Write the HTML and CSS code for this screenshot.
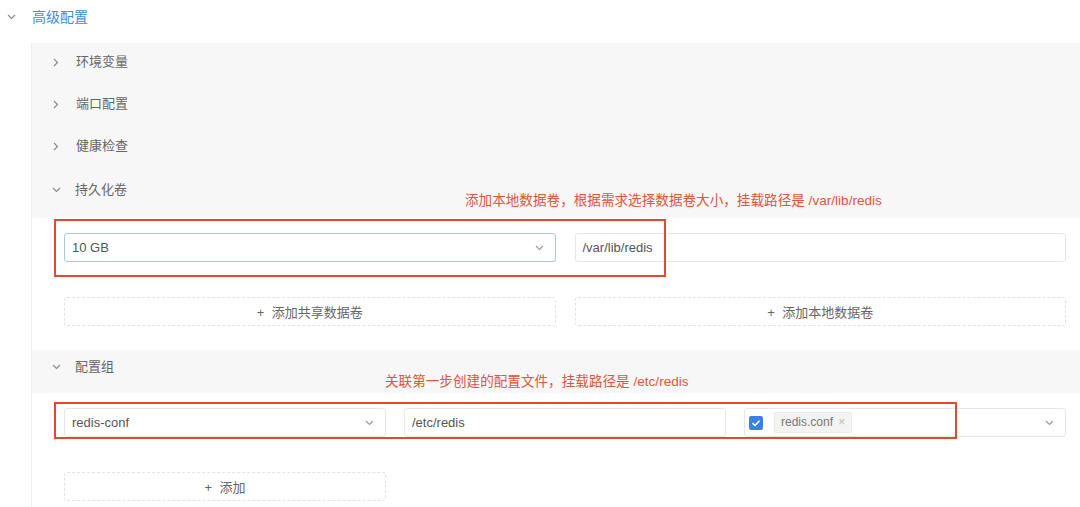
FILE: index.html
```html
<!DOCTYPE html>
<html lang="zh-CN">
<head>
<meta charset="utf-8">
<title>高级配置</title>
<link rel="stylesheet" href="styles.css">
</head>
<body>
<div class="section-head">
  <svg class="chev chev-down" width="9" height="6" viewBox="0 0 9 6"><path d="M1 1 L4.5 4.5 L8 1" fill="none" stroke="#888" stroke-width="1.1"/></svg>
  <span class="section-title">高级配置</span>
</div>
<div class="panel">
  <div class="row-head">
    <svg class="chev chev-right" width="6" height="9" viewBox="0 0 6 9"><path d="M1 1 L4.5 4.5 L1 8" fill="none" stroke="#888" stroke-width="1.1"/></svg>
    <span class="row-title">环境变量</span>
  </div>
  <div class="row-head">
    <svg class="chev chev-right" width="6" height="9" viewBox="0 0 6 9"><path d="M1 1 L4.5 4.5 L1 8" fill="none" stroke="#888" stroke-width="1.1"/></svg>
    <span class="row-title">端口配置</span>
  </div>
  <div class="row-head">
    <svg class="chev chev-right" width="6" height="9" viewBox="0 0 6 9"><path d="M1 1 L4.5 4.5 L1 8" fill="none" stroke="#888" stroke-width="1.1"/></svg>
    <span class="row-title">健康检查</span>
  </div>
  <div class="row-head row-tall">
    <svg class="chev" width="9" height="6" viewBox="0 0 9 6"><path d="M1 1 L4.5 4.5 L8 1" fill="none" stroke="#888" stroke-width="1.1"/></svg>
    <span class="row-title">持久化卷</span>
    <span class="note note-1">添加本地数据卷，根据需求选择数据卷大小，挂载路径是 /var/lib/redis</span>
  </div>
  <div class="content content-1">
    <div class="grid2">
      <div class="field select focused"><span>10 GB</span>
        <svg class="sel-arrow" width="9" height="6" viewBox="0 0 9 6"><path d="M1 1 L4.5 4.5 L8 1" fill="none" stroke="#999" stroke-width="1.1"/></svg>
      </div>
      <div class="field"><span>/var/lib/redis</span></div>
    </div>
    <div class="grid2 btn-row">
      <div class="dashed-btn">+&nbsp;&nbsp;添加共享数据卷</div>
      <div class="dashed-btn">+&nbsp;&nbsp;添加本地数据卷</div>
    </div>
    <div class="redbox redbox-1"></div>
  </div>
  <div class="row-head row-cfg">
    <svg class="chev" width="9" height="6" viewBox="0 0 9 6"><path d="M1 1 L4.5 4.5 L8 1" fill="none" stroke="#888" stroke-width="1.1"/></svg>
    <span class="row-title">配置组</span>
    <span class="note note-2">关联第一步创建的配置文件，挂载路径是 /etc/redis</span>
  </div>
  <div class="content content-2">
    <div class="grid3">
      <div class="field select"><span>redis-conf</span>
        <svg class="sel-arrow" width="9" height="6" viewBox="0 0 9 6"><path d="M1 1 L4.5 4.5 L8 1" fill="none" stroke="#999" stroke-width="1.1"/></svg>
      </div>
      <div class="field"><span>/etc/redis</span></div>
      <div class="field select multi">
        <span class="checkbox"><svg width="14" height="14" viewBox="0 0 14 14"><rect width="14" height="14" rx="2" fill="#3b80e8"/><path d="M3.5 7.2 L6 9.5 L10.5 4.8" fill="none" stroke="#fff" stroke-width="1.6"/></svg></span>
        <span class="tag">redis.conf <span class="tag-x">×</span></span>
        <svg class="sel-arrow" width="9" height="6" viewBox="0 0 9 6"><path d="M1 1 L4.5 4.5 L8 1" fill="none" stroke="#999" stroke-width="1.1"/></svg>
      </div>
    </div>
    <div class="grid3 btn-row">
      <div class="dashed-btn">+&nbsp;&nbsp;添加</div>
    </div>
    <div class="redbox redbox-2"></div>
  </div>
</div>
</body>
</html>
```
FILE: styles.css
```css
* { box-sizing: border-box; }
body {
  margin: 0;
  font-family: "Liberation Sans", "Noto Sans CJK SC", sans-serif;
  font-size: 13px;
  color: #666;
  background: #fff;
}
.section-head {
  height: 43px;
  display: flex;
  align-items: flex-start;
  padding-top: 8px;
  line-height: 18px;
}
.section-head .chev-down { margin: 6px 0 0 7px; }
.section-title {
  margin-left: 16px;
  font-size: 14px;
  color: #3a8ee6;
}
.panel {
  margin-left: 31px;
  border-left: 1px solid #ececec;
  background: #f7f7f7;
}
.row-head {
  position: relative;
  height: 42px;
  display: flex;
  align-items: flex-start;
  padding-top: 10px;
  line-height: 18px;
}
.row-head .chev { width: 9px; margin: 6px 0 0 20px; flex: none; }
.row-head .chev-right { width: 6px; margin: 5px 3px 0 21px; }
.row-title { margin-left: 14px; color: #666; }
.row-tall { height: 49px; padding-top: 12px; }
.row-cfg { height: 43px; padding-top: 8px; }
.note {
  position: absolute;
  color: #e4533b;
  font-size: 13.6px;
  white-space: nowrap;
  line-height: 16px;
}
.note-1 { left: 433px; top: 24px; }
.note-2 { left: 353px; top: 24px; }
.content {
  position: relative;
  background: #fff;
  padding: 15px 14px 0 32px;
}
.content-1 { height: 132px; }
.content-2 { height: 114px; }
.grid2 {
  display: grid;
  grid-template-columns: 1fr 1fr;
  column-gap: 19px;
}
.grid3 {
  display: grid;
  grid-template-columns: 1fr 1fr 1fr;
  column-gap: 18px;
}
.btn-row { margin-top: 35px; }
.field {
  height: 29px;
  border: 1px solid #e6e6e6;
  border-radius: 3px;
  background: #fff;
  display: flex;
  align-items: center;
  padding-left: 7px;
  color: #555;
  font-size: 13px;
}
.field.focused { border-color: #a9c5e2; }
.select { position: relative; padding-right: 30px; }
.sel-arrow { position: absolute; right: 11px; top: 11px; }
.multi { padding-left: 4px; }
.checkbox { display: flex; width: 14px; height: 14px; margin-right: 11px; }
.tag {
  height: 21px;
  line-height: 19px;
  padding: 0 6px;
  background: #f3f3f3;
  border: 1px solid #ebebeb;
  border-radius: 2px;
  color: #777;
  font-size: 12px;
}
.tag-x { color: #bbb; margin-left: 2px; }
.dashed-btn {
  height: 29px;
  border: 1px dashed #e3e3e3;
  border-radius: 3px;
  display: flex;
  align-items: center;
  justify-content: center;
  color: #666;
  font-size: 13px;
}
.redbox {
  position: absolute;
  border: 2px solid #e04b30;
}
.redbox-1 { left: 22px; top: 1px; width: 612px; height: 58px; }
.redbox-2 { left: 22px; top: 9px; width: 903px; height: 37px; }
```
